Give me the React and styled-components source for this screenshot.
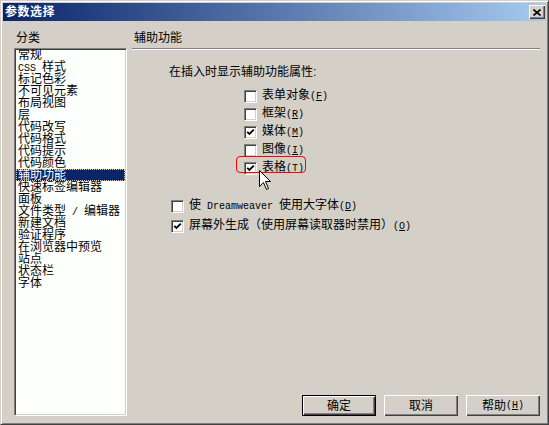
import React from "react";
import styled, { createGlobalStyle } from "styled-components";

const Global = createGlobalStyle`
  html, body { margin: 0; padding: 0; background: #d4d0c8; }
  body {
    font-family: "Liberation Sans", "Noto Sans CJK SC", sans-serif;
    font-size: 12px;
    color: #000;
  }
  * { box-sizing: border-box; }
`;

const Window = styled.div`
  width: 549px;
  height: 425px;
  background: #d4d0c8;
  border: 1px solid;
  border-color: #d4d0c8 #404040 #404040 #d4d0c8;
  box-shadow: inset 1px 1px #fff, inset -1px -1px #808080;
  padding: 2px;
  display: flex;
  flex-direction: column;
`;

const TitleBar = styled.div`
  height: 18px;
  flex: none;
  display: flex;
  align-items: center;
  justify-content: space-between;
  padding: 0 1px 0 2px;
  background: linear-gradient(to right, #0a246a, #a6caf0);
`;

const Title = styled.span`
  color: #fff;
  font-weight: bold;
  font-size: 12px;
  line-height: 12px;
  letter-spacing: 0.5px;
`;

const CloseBtn = styled.div`
  width: 16px;
  height: 14px;
  background: #d4d0c8;
  box-shadow: inset 1px 1px #fff, inset -1px -1px #404040, inset -2px -2px #808080;
  display: flex;
  align-items: center;
  justify-content: center;
`;

const Main = styled.div`
  flex: 1;
  display: flex;
  padding: 11px 6px 6px 11px;
  min-height: 0;
`;

const LeftCol = styled.div`
  width: 113px;
  flex: none;
  display: flex;
  flex-direction: column;
  gap: 4px;
`;

const Label = styled.div`
  line-height: 12px;
  height: 12px;
  padding-left: 2px;
`;

const ListBox = styled.div`
  flex: 1;
  background: #fdfffd;
  border: 1px solid;
  border-color: #808080 #fff #fff #808080;
  box-shadow: inset 1px 1px #404040, inset -1px -1px #d4d0c8;
  padding: 0 1px 1px 1px;
  overflow: hidden;
`;

const Item = styled.div`
  height: 12px;
  line-height: 12px;
  padding-left: 2px;
  white-space: nowrap;
  background: ${(p) => (p.$selected ? "#0a246a" : "transparent")};
  color: ${(p) => (p.$selected ? "#fff" : "#000")};
  outline: ${(p) => (p.$selected ? "1px dotted #d8d0a0" : "none")};
  outline-offset: -1px;
`;

const Lat = styled.span`
  font-family: "Liberation Mono", monospace;
  font-size: 10px;
  white-space: pre;
`;

const RightCol = styled.div`
  flex: 1;
  margin-left: 5px;
  display: flex;
  flex-direction: column;
`;

const Heading = styled.div`
  line-height: 12px;
  height: 12px;
  padding-left: 2px;
  margin-bottom: 4px;
`;

const Separator = styled.div`
  border-top: 1px solid #808080;
  border-bottom: 1px solid #fff;
`;

const Intro = styled.div`
  margin: 16px 0 0 37px;
  line-height: 12px;
  height: 12px;
`;

const CheckGroup = styled.div`
  display: flex;
  flex-direction: column;
  margin-left: ${(p) => p.$indent}px;
  margin-top: ${(p) => p.$top}px;
`;

const Row = styled.div`
  position: relative;
  display: flex;
  align-items: center;
  gap: 5px;
  height: ${(p) => p.$h}px;
  line-height: 12px;
  white-space: nowrap;
`;

const Box = styled.div`
  width: 13px;
  height: 13px;
  flex: none;
  background: #fff;
  border: 1px solid;
  border-color: #808080 #fff #fff #808080;
  box-shadow: inset 1px 1px #404040, inset -1px -1px #d4d0c8;
  display: flex;
  align-items: center;
  justify-content: center;
`;

const Mn = styled.span`
  font-family: "Liberation Mono", monospace;
  font-size: 10px;
  u { text-underline-offset: 1px; }
`;

const Highlight = styled.div`
  position: absolute;
  left: -8px;
  top: -3px;
  width: 70px;
  height: 17px;
  border: 1px solid #ff0000;
  border-radius: 4px;
  pointer-events: none;
`;

const Cursor = styled.svg`
  position: absolute;
  left: 15px;
  top: 11px;
`;

const Footer = styled.div`
  margin-top: auto;
  display: flex;
  justify-content: flex-end;
  gap: 8px;
`;

const Button = styled.div`
  width: 74px;
  height: 21px;
  display: flex;
  align-items: center;
  justify-content: center;
  line-height: 12px;
  background: #d4d0c8;
  border: ${(p) => (p.$default ? "1px solid #000" : "none")};
  box-shadow: inset 1px 1px #fff, inset -1px -1px #404040, inset -2px -2px #808080;
`;

const Check = () => (
  <svg width="9" height="9" viewBox="0 0 9 9">
    <path d="M1.2 3.8 L3.4 6 L7.8 1.6" fill="none" stroke="#000" strokeWidth="1.8" />
  </svg>
);

const CheckBox = ({ checked }) => <Box>{checked ? <Check /> : null}</Box>;

const items = [
  "常规",
  <><Lat>CSS </Lat>样式</>,
  "标记色彩",
  "不可见元素",
  "布局视图",
  "层",
  "代码改写",
  "代码格式",
  "代码提示",
  "代码颜色",
  "辅助功能",
  "快速标签编辑器",
  "面板",
  <>文件类型<Lat> / </Lat>编辑器</>,
  "新建文档",
  "验证程序",
  "在浏览器中预览",
  "站点",
  "状态栏",
  "字体",
];

const options = [
  { label: "表单对象", key: "F", checked: false },
  { label: "框架", key: "R", checked: false },
  { label: "媒体", key: "M", checked: true },
  { label: "图像", key: "I", checked: false },
  { label: "表格", key: "T", checked: true, marked: true },
];

export default function App() {
  return (
    <>
      <Global />
      <Window>
        <TitleBar>
          <Title>参数选择</Title>
          <CloseBtn>
            <svg width="8" height="7" viewBox="0 0 8 7">
              <path d="M0.5 0.5 L7.5 6.5 M7.5 0.5 L0.5 6.5" stroke="#000" strokeWidth="1.6" />
            </svg>
          </CloseBtn>
        </TitleBar>
        <Main>
          <LeftCol>
            <Label>分类</Label>
            <ListBox>
              {items.map((it, i) => (
                <Item key={i} $selected={i === 10}>{it}</Item>
              ))}
            </ListBox>
          </LeftCol>
          <RightCol>
            <Heading>辅助功能</Heading>
            <Separator />
            <Intro>在插入时显示辅助功能属性:</Intro>
            <CheckGroup $indent={112} $top={9}>
              {options.map((o) => (
                <Row key={o.key} $h={18}>
                  <CheckBox checked={o.checked} />
                  <span>
                    {o.label}
                    <Mn>(<u>{o.key}</u>)</Mn>
                  </span>
                  {o.marked && (
                    <>
                      <Highlight />
                      <Cursor width="13" height="21" viewBox="0 0 13 21">
                        <path
                          d="M0.5 0.5 L0.5 16.5 L4.5 12.5 L7.5 19.5 L9.5 18.5 L6.5 11.5 L11.5 11.5 Z"
                          fill="#fff"
                          stroke="#000"
                          strokeWidth="1"
                          strokeLinejoin="miter"
                        />
                      </Cursor>
                    </>
                  )}
                </Row>
              ))}
            </CheckGroup>
            <CheckGroup $indent={39} $top={19}>
              <Row $h={20}>
                <CheckBox checked={false} />
                <span>
                  使<Lat> Dreamweaver </Lat>使用大字体<Mn>(<u>D</u>)</Mn>
                </span>
              </Row>
              <Row $h={20}>
                <CheckBox checked={true} />
                <span>
                  屏幕外生成（使用屏幕读取器时禁用）<Mn>(<u>O</u>)</Mn>
                </span>
              </Row>
            </CheckGroup>
            <Footer>
              <Button $default>确定</Button>
              <Button>取消</Button>
              <Button>
                帮助<Mn>(<u>H</u>)</Mn>
              </Button>
            </Footer>
          </RightCol>
        </Main>
      </Window>
    </>
  );
}
